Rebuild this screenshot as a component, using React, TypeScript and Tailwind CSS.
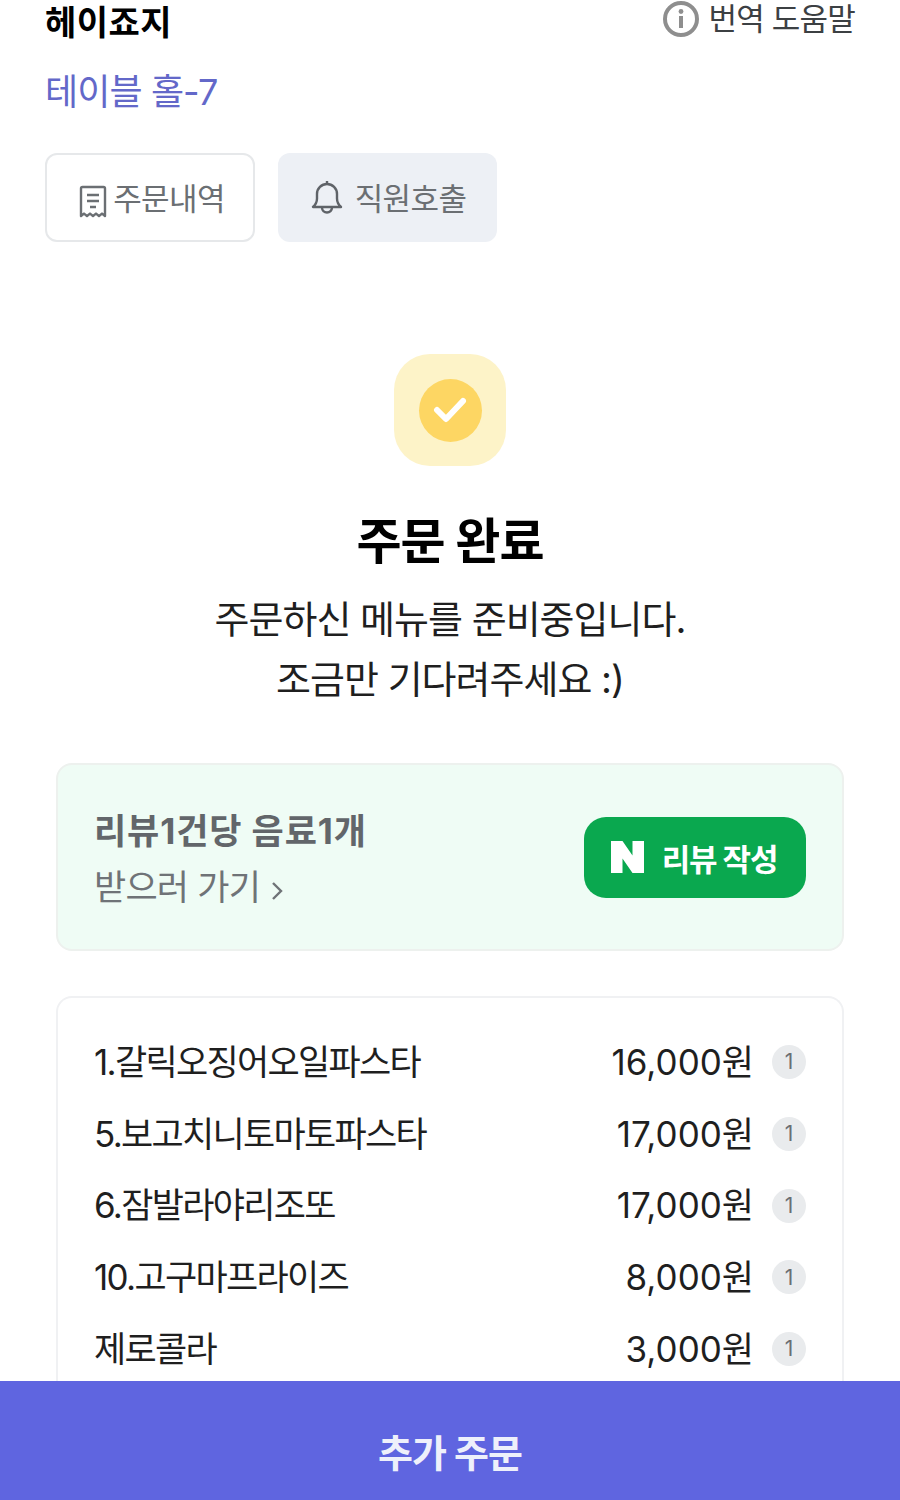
import React from 'react';

const font = "font-['Inter','Noto_Sans_CJK_KR',sans-serif]";

const orders = [
  { name: '1.갈릭오징어오일파스타', price: '16,000원' },
  { name: '5.보고치니토마토파스타', price: '17,000원' },
  { name: '6.잠발라야리조또', price: '17,000원' },
  { name: '10.고구마프라이즈', price: '8,000원' },
  { name: '제로콜라', price: '3,000원' },
];

const ReceiptIcon = () => (
  <svg width="28" height="34" viewBox="0 0 28 34" fill="none" stroke="#6b6f73" strokeWidth="2.4" className="shrink-0 translate-y-[4px]">
    <path d="M2 31V3.500A1.500 1.500 0 0 1 3.500 2h21A1.500 1.500 0 0 1 26 3.500V31l-3-2.400-3 2.400-3-2.400-3 2.400-3-2.400-3 2.400-3-2.400z" strokeLinejoin="round" />
    <path d="M8 10h12M8 16h12M11 22h6" />
  </svg>
);

const BellIcon = () => (
  <svg width="32" height="36" viewBox="0 0 32 36" fill="none" stroke="#5f6368" strokeWidth="2.4" className="shrink-0">
    <path d="M2 27h28c-2.600-2.400-4-5-4-8.500V14C26 8.500 21.500 4 16 4S6 8.500 6 14v4.500C6 22 4.600 24.600 2 27z" strokeLinejoin="round" />
    <path d="M11 27.500a5 5 0 0 0 10 0" />
    <path d="M16 1v3" />
  </svg>
);

const App = () => {
  return (
    <div className={`${font} flex h-[1500px] w-[900px] flex-col overflow-hidden bg-white`}>
      <div className="flex-1 overflow-hidden px-[45px]">
        <div className="flex h-[46px] items-start justify-between">
          <h1 className="text-[34px] leading-[46px] font-bold tracking-[0.5px] text-black">헤이죠지</h1>
          <div className="flex items-center gap-[9px] text-[#3c4043]">
            <svg width="36" height="36" viewBox="0 0 36 36" fill="none" className="shrink-0">
              <circle cx="18" cy="18" r="16" stroke="#8e8e8e" strokeWidth="4" />
              <circle cx="18" cy="10.500" r="2.400" fill="#8e8e8e" />
              <path d="M18 15v12" stroke="#8e8e8e" strokeWidth="4" />
            </svg>
            <span className="text-[31px] leading-[38px] tracking-[-0.8px]">번역 도움말</span>
          </div>
        </div>

        <p className="mt-[21px] text-[36px] leading-[50px] tracking-[-0.9px] text-[#6368c9]">테이블 홀-7</p>

        <div className="mt-[36px] flex gap-[23px]">
          <button className="flex h-[89px] w-[210px] items-center justify-center rounded-[12px] border-2 border-[#e6e8ea] bg-white pl-[4px] text-[31px] tracking-[-0.6px] text-[#6b6f73]">
            <ReceiptIcon />
            <span className="ml-[6px] translate-y-[2px]">주문내역</span>
          </button>
          <button className="flex h-[89px] w-[219px] items-center justify-center gap-[12px] rounded-[12px] bg-[#edf0f5] pl-[2px] text-[31px] tracking-[-0.6px] text-[#6b6f73]">
            <BellIcon />
            <span className="translate-y-[2px]">직원호출</span>
          </button>
        </div>

        <div className="mt-[112px] flex flex-col items-center">
          <div className="flex h-[112px] w-[112px] items-center justify-center rounded-[36px] bg-[#fdf3c8]">
            <div className="flex h-[63px] w-[63px] items-center justify-center rounded-full bg-[#fdd663]">
              <svg width="34" height="28" viewBox="0 0 34 28" fill="none">
                <path d="M4 14l9 9L30 5" stroke="white" strokeWidth="6" strokeLinecap="round" strokeLinejoin="round" />
              </svg>
            </div>
          </div>
          <h2 className="mt-[44px] text-[49px] leading-[64px] font-bold tracking-[-1px] text-black">주문 완료</h2>
          <p className="mt-[15px] text-center text-[38px] leading-[60px] tracking-[-1px] text-[#1f1f1f]">
            주문하신 메뉴를 준비중입니다.
            <br />
            조금만 기다려주세요 :)
          </p>
        </div>

        <div className="mx-[11px] mt-[54px] flex h-[188px] items-center justify-between rounded-[16px] border-2 border-[#edf1ee] bg-[#effcf5] px-[36px]">
          <div className="translate-y-[2px]">
            <p className="text-[35px] leading-[56px] font-bold tracking-[0.9px] text-[#62666a]">리뷰1건당 음료1개</p>
            <p className="flex items-center text-[35px] leading-[56px] tracking-[-0.8px] text-[#6f7377]">
              받으러 가기
              <svg width="12" height="22" viewBox="0 0 12 22" fill="none" stroke="#6f7377" strokeWidth="2.400" className="mt-[7px] ml-[11px]">
                <path d="M2 3l8 8-8 8" />
              </svg>
            </p>
          </div>
          <button className="flex h-[81px] w-[222px] items-center justify-center gap-[18px] rounded-[22px] bg-[#0aa84f] pr-[2px] text-white">
            <svg width="33" height="32" viewBox="0 0 33 32" className="shrink-0">
              <path d="M0 0h11.500l10 14.500V0H33v32H21.500l-10-14.500V32H0z" fill="white" />
            </svg>
            <span className="translate-y-[2px] text-[31px] leading-none font-bold tracking-[-1.2px]">리뷰 작성</span>
          </button>
        </div>

        <div className="mx-[11px] mt-[45px] rounded-t-[16px] border-x-2 border-t-2 border-[#f0f1f3] px-[36px] pt-[38px] pb-[40px]">
          <ul className="flex flex-col gap-[19.75px]">
            {orders.map((item) => (
              <li key={item.name} className="flex h-[52px] items-center justify-between">
                <span className="text-[35px] tracking-[-1.7px] text-[#1f1f1f]">{item.name}</span>
                <div className="flex items-center gap-[18px]">
                  <span className="text-[35px] tracking-[0px] text-[#1f1f1f]">{item.price}</span>
                  <span className="flex h-[34px] w-[34px] items-center justify-center rounded-full bg-[#e9ebed] text-[21px] text-[#6b6f73]">1</span>
                </div>
              </li>
            ))}
          </ul>
        </div>
      </div>

      <button className="flex h-[119px] w-full shrink-0 items-center justify-center bg-[#5f65e0] pt-[34px] pb-[8px] text-[38px] font-bold tracking-[-1px] text-[#eef0fb]">
        추가 주문
      </button>
    </div>
  );
};

export default App;
